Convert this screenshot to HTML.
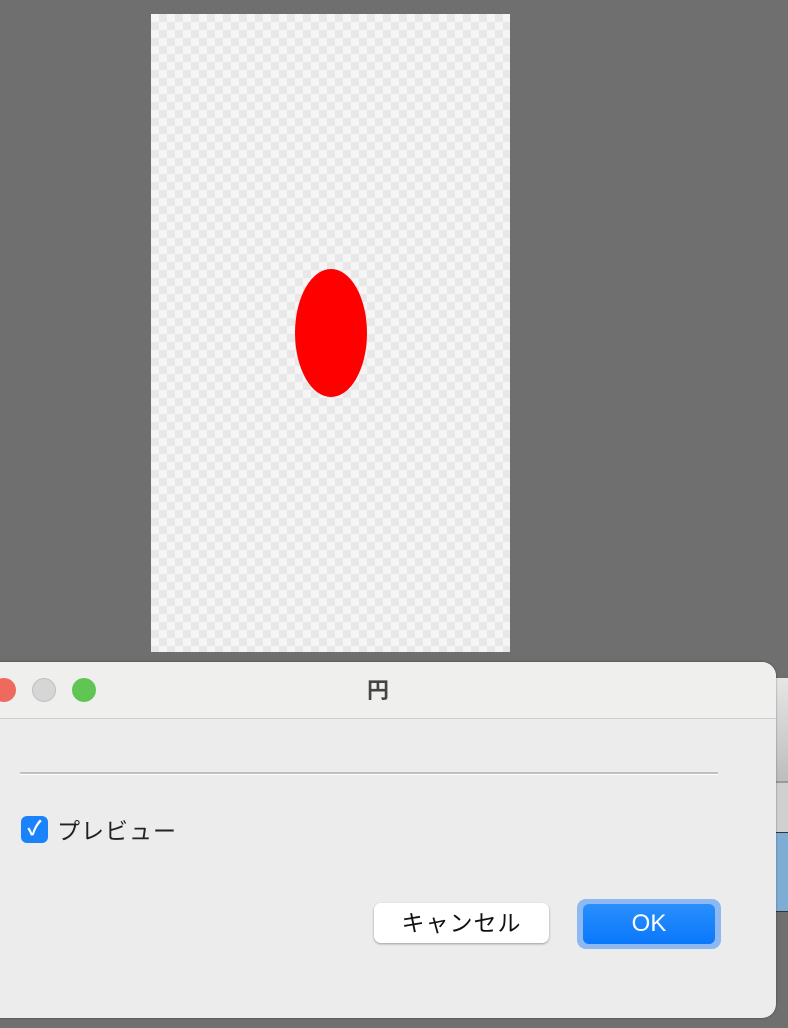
<!DOCTYPE html>
<html><head><meta charset="utf-8"><style>
body{margin:0;width:788px;height:1028px;background:#6f6f6f;position:relative;overflow:hidden;font-family:"Liberation Sans","Noto Sans CJK JP",sans-serif}
.canvas{position:absolute;left:151px;top:14px;width:359px;height:638px;background-color:#f5f5f5;
background-image:linear-gradient(45deg,#e8e8e8 25%,transparent 25%,transparent 75%,#e8e8e8 75%),linear-gradient(45deg,#e8e8e8 25%,transparent 25%,transparent 75%,#e8e8e8 75%);
background-size:16px 16px;background-position:0 0,8px 8px}
.ell{position:absolute;left:295px;top:269px;width:72px;height:128px;border-radius:50%;background:#ff0000}
.side{position:absolute;left:770px;width:18px}
.dlg{position:absolute;left:-20px;top:662px;width:796px;height:356px;background:#ececec;border-radius:0 14px 14px 0;box-shadow:0 0 2px rgba(0,0,0,.4)}
.tb{height:56px;background:#efefed;border-bottom:1px solid #cfcfcf;border-radius:0 14px 0 0;position:relative}
.dot{position:absolute;top:16px;width:24px;height:24px;border-radius:50%}
.title{position:absolute;left:0;right:0;top:11px;text-align:center;font-size:22px;font-weight:bold;color:#444}
.sep{position:absolute;left:40px;top:110px;width:698px;height:2px;background:#c0c0c0;border-bottom:1px solid #fff}
.cb{position:absolute;left:41px;top:154px;width:27px;height:27px;border-radius:6px;background:#1a82fb;color:#fff;font-size:20px;text-align:center;line-height:27px;font-weight:bold}
.lbl{position:absolute;left:77px;top:150px;font-size:23px;letter-spacing:1px;color:#222}
.cancel{position:absolute;left:394px;top:241px;width:175px;height:40px;background:#fff;border-radius:7px;box-shadow:0 1px 2px rgba(0,0,0,.35);text-align:center;line-height:40px;font-size:23px;letter-spacing:1px;color:#111}
.okr{position:absolute;left:597px;top:237px;width:144px;height:50px;border-radius:9px;background:#8db8f2}
.ok{position:absolute;left:603px;top:242px;width:132px;height:40px;border-radius:6px;background:linear-gradient(#2a8ffd,#0a78fb);color:#fff;text-align:center;line-height:40px;font-size:24px}
</style></head><body>
<div class="canvas"></div><div class="ell"></div>
<div class="side" style="top:678px;height:103px;background:linear-gradient(#e6e6e6,#bdbdbd)"></div>
<div class="side" style="top:781px;height:2px;background:#9a9a9a"></div>
<div class="side" style="top:783px;height:49px;background:#cfcfcf"></div>
<div class="side" style="top:832px;height:78px;background:#7eadd4;border-top:1px solid #333;border-bottom:1px solid #333"></div>
<div class="dlg">
<div class="tb">
<div class="dot" style="left:12px;background:#ee6a5e"></div>
<div class="dot" style="left:52px;background:#d6d6d6;border:1px solid #c0c0c0;width:22px;height:22px"></div>
<div class="dot" style="left:92px;background:#61c554"></div>
<div class="title">円</div>
</div>
<div class="sep"></div>
<div class="cb">✓</div><div class="lbl">プレビュー</div>
<div class="cancel">キャンセル</div>
<div class="okr"></div><div class="ok">OK</div>
</div>
</body></html>
